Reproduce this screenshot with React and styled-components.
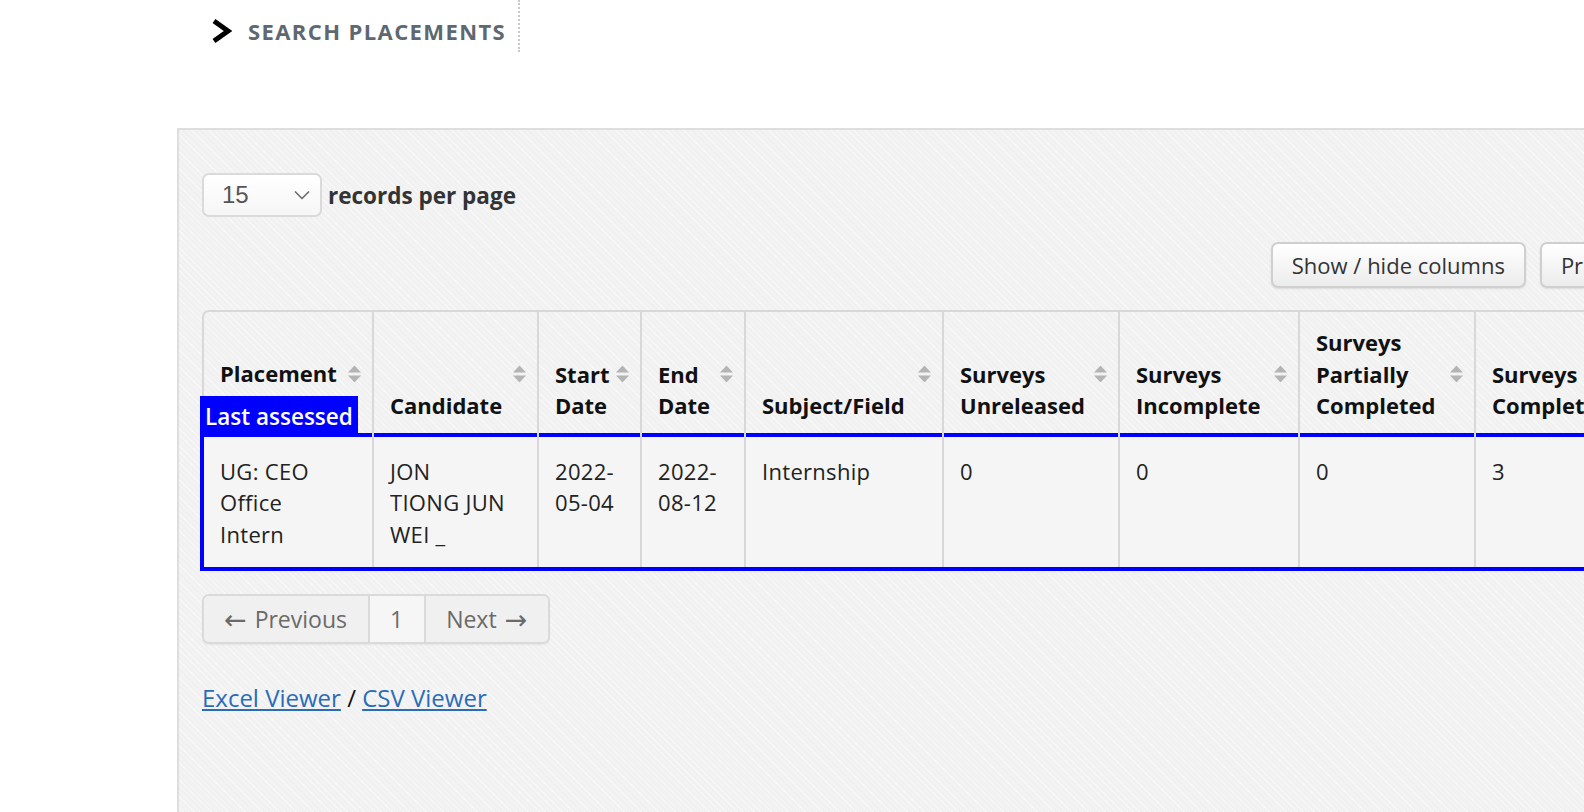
import * as React from "react";
import styled, { createGlobalStyle } from "styled-components";

const columns = [
    { w: 168, lines: ["Placement"], badge: true },
    { w: 165, lines: ["Candidate"] },
    { w: 103, lines: ["Start", "Date"] },
    { w: 104, lines: ["End", "Date"] },
    { w: 198, lines: ["Subject/Field"] },
    { w: 176, lines: ["Surveys", "Unreleased"] },
    { w: 180, lines: ["Surveys", "Incomplete"] },
    { w: 176, lines: ["Surveys", "Partially", "Completed"] },
    { w: 166, lines: ["Surveys", "Completed"] },
];

const rows = [
    [
        ["UG: CEO", "Office", "Intern"],
        ["JON", "TIONG JUN", "WEI _"],
        ["2022-", "05-04"],
        ["2022-", "08-12"],
        ["Internship"],
        ["0"],
        ["0"],
        ["0"],
        ["3"],
    ],
];

function Lines({ lines }) {
    return lines.map((l, i) => (
        <React.Fragment key={i}>
            {i > 0 && <br />}
            {l}
        </React.Fragment>
    ));
}

function SortIcon() {
    return (
        <SortWrap viewBox="0 0 13 17" width="13" height="17">
            <polygon points="6.5,0 13,7 0,7" />
            <polygon points="0,10 13,10 6.5,17" />
        </SortWrap>
    );
}

export default function App() {
    const tableWidth = columns.reduce((s, c) => s + c.w, 0) + 4;

    return (
        <>
            <GlobalStyle />
            <TopBar>
                <Crumb>
                    <svg width="21" height="26" viewBox="0 0 21 26">
                        <polyline points="3,3 17,13 3,23" fill="none" stroke="#000" strokeWidth="5" />
                    </svg>
                    <CrumbTitle>Search Placements</CrumbTitle>
                </Crumb>
            </TopBar>

            <Panel>
                <LengthRow>
                    <FakeSelect>
                        <span>15</span>
                        <svg width="16" height="10" viewBox="0 0 16 10">
                            <polyline points="1,1.5 8,8.5 15,1.5" fill="none" stroke="#666" strokeWidth="1.5" />
                        </svg>
                    </FakeSelect>
                    <LengthLabel>records per page</LengthLabel>
                </LengthRow>

                <Toolbar>
                    <ToolButton>Show / hide columns</ToolButton>
                    <ToolButton>Print</ToolButton>
                </Toolbar>

                <Table style={{ width: tableWidth }}>
                    <thead>
                        <tr>
                            {columns.map((c, i) => (
                                <HeadCell key={i} $w={c.w} $first={i === 0} $badge={c.badge}>
                                    <Lines lines={c.lines} />
                                    <SortIcon />
                                    {c.badge && <Badge>Last assessed</Badge>}
                                </HeadCell>
                            ))}
                        </tr>
                    </thead>
                    <tbody>
                        {rows.map((r, ri) => (
                            <SelectedRow key={ri}>
                                {r.map((cell, ci) => (
                                    <BodyCell key={ci} $first={ci === 0}>
                                        <Lines lines={cell} />
                                    </BodyCell>
                                ))}
                            </SelectedRow>
                        ))}
                    </tbody>
                </Table>

                <Pager>
                    <PageButton><Arrow>←</Arrow> Previous</PageButton>
                    <PageButton $active>1</PageButton>
                    <PageButton>Next <Arrow>→</Arrow></PageButton>
                </Pager>

                <Exports>
                    <ExportLink href="#">Excel Viewer</ExportLink> / <ExportLink href="#">CSV Viewer</ExportLink>
                </Exports>
            </Panel>
        </>
    );
}

const GlobalStyle = createGlobalStyle`
  html, body {
    margin: 0;
    padding: 0;
    background: #fff;
    overflow: hidden;
  }
  body {
    font-family: "Open Sans", "Liberation Sans", sans-serif;
    color: #222;
  }
`;

const TopBar = styled.header`
    display: flex;
    height: 52px;
    padding-left: 211px;
`;

const Crumb = styled.div`
    display: flex;
    align-items: center;
    gap: 16px;
    padding: 10px 12px 0 0;
    border-right: 2px dotted #c9c9c9;
`;

const CrumbTitle = styled.span`
    font-size: 22px;
    font-weight: 700;
    letter-spacing: 1.4px;
    text-transform: uppercase;
    color: #5e6870;
`;

const Panel = styled.section`
    box-sizing: border-box;
    width: 1477px;
    min-height: 720px;
    margin: 76px 0 0 177px;
    padding: 43px 23px 40px;
    border-top: 2px solid #dedede;
    border-left: 2px solid #dedede;
    background-color: #f1f1f1;
    background-image: repeating-linear-gradient(
        45deg,
        rgba(255, 255, 255, 0.45) 0 1px,
        transparent 1px 4px
    );
`;

const LengthRow = styled.div`
    display: flex;
    align-items: center;
    gap: 6px;
`;

const FakeSelect = styled.div`
    box-sizing: border-box;
    width: 120px;
    height: 44px;
    display: flex;
    align-items: center;
    justify-content: space-between;
    padding: 0 10px 0 18px;
    border: 2px solid #dadada;
    border-radius: 7px;
    background: linear-gradient(#ffffff, #f6f6f6);
    font-family: "Liberation Sans", Arial, sans-serif;
    font-size: 24px;
    color: #555;
`;

const LengthLabel = styled.span`
    font-size: 22.5px;
    font-weight: 700;
    color: #333;
`;

const Toolbar = styled.div`
    display: flex;
    justify-content: flex-end;
    gap: 14px;
    margin-top: 25px;
`;

const ToolButton = styled.button`
    box-sizing: border-box;
    height: 46px;
    padding: 0 19px;
    font-family: inherit;
    font-size: 22px;
    color: #333;
    border: 2px solid #cfcfcf;
    border-radius: 7px;
    background: linear-gradient(#ffffff, #ececec);
    box-shadow: 0 1px 2px rgba(0, 0, 0, 0.1);
    cursor: pointer;
`;

const Table = styled.table`
    margin-top: 22px;
    table-layout: fixed;
    border-collapse: separate;
    border-spacing: 0;
    border: 2px solid #d8d8d8;
    border-radius: 7px;
    font-size: 22px;
    line-height: 31.5px;
`;

const HeadCell = styled.th`
    position: relative;
    box-sizing: border-box;
    width: ${(p) => p.$w}px;
    padding: 15px 36px ${(p) => (p.$badge ? "47px" : "15px")} 16px;
    border-left: ${(p) => (p.$first ? "none" : "2px solid #d8d8d8")};
    vertical-align: bottom;
    text-align: left;
    white-space: nowrap;
    font-weight: 700;
    color: #111;
`;

const SortWrap = styled.svg`
    position: absolute;
    right: 11px;
    top: 50%;
    transform: translateY(-50%);
    fill: #b4b4b4;
`;

const Badge = styled.span`
    position: absolute;
    left: -4px;
    bottom: 0;
    height: 41px;
    padding: 0 5px;
    line-height: 41px;
    background: #0000ff;
    color: #fff;
    font-size: 22.5px;
    font-weight: 600;
`;

const SelectedRow = styled.tr`
    outline: 4px solid #0000ff;
`;

const BodyCell = styled.td`
    padding: 19px 16px 17px;
    border-left: ${(p) => (p.$first ? "none" : "2px solid #d8d8d8")};
    background: #f5f5f5;
    vertical-align: top;
    white-space: nowrap;
    letter-spacing: 0.3px;
    color: #222;
`;

const Pager = styled.div`
    display: inline-flex;
    box-sizing: border-box;
    height: 50px;
    margin-top: 25px;
    border: 2px solid #dadada;
    border-radius: 7px;
    overflow: hidden;
    box-shadow: 0 1px 2px rgba(0, 0, 0, 0.06);
`;

const PageButton = styled.span`
    display: flex;
    align-items: center;
    gap: 8px;
    padding: 0 21px 0 20px;
    font-size: 23px;
    color: #6a6a6a;
    background: ${(p) => (p.$active ? "#f6f6f6" : "#f0f0f0")};
    & + & {
        border-left: 2px solid #dadada;
    }
`;

const Arrow = styled.span`
    font-family: "DejaVu Sans", sans-serif;
    font-size: 27px;
    line-height: 1;
`;

const Exports = styled.div`
    margin-top: 38px;
    font-size: 24px;
    line-height: 31px;
    color: #111;
`;

const ExportLink = styled.a`
    color: #2a6cb8;
    text-decoration: underline;
`;
